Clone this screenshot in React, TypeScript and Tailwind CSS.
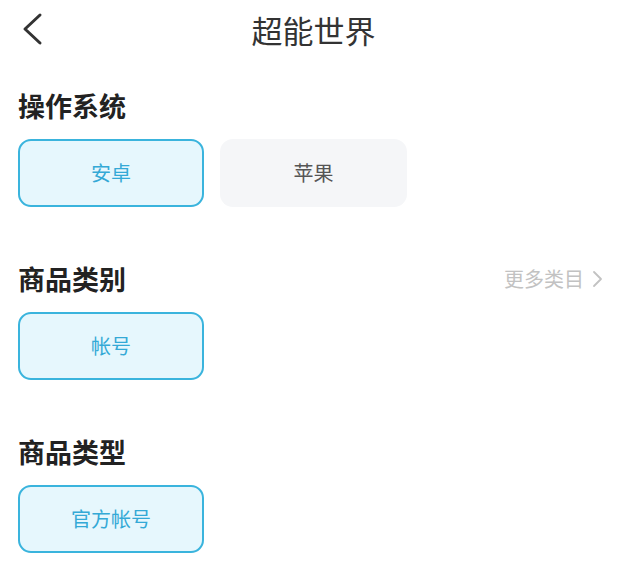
import React from "react";

const font = { fontFamily: '"Noto Sans CJK SC", "Noto Sans", sans-serif' };

function Chip({ label, active }: { label: string; active?: boolean }) {
  return (
    <div
      className={
        active
          ? "w-[186px] h-[68px] rounded-[13px] border-2 border-[#3ab4dd] bg-[#e6f7fd] flex items-center justify-center text-[20px] text-[#34a9d6]"
          : "w-[187px] h-[68px] rounded-[13px] bg-[#f5f6f8] flex items-center justify-center text-[20px] text-[#555555]"
      }
    >
      {label}
    </div>
  );
}

function Section({ title, more, children }: { title: string; more?: boolean; children: React.ReactNode }) {
  return (
    <div className="flex flex-col">
      <div className="flex items-center justify-between h-[36px] pr-[24px]">
        <div className="text-[27px] font-bold text-[#222222] leading-[36px]">{title}</div>
        {more && (
          <div className="flex items-center text-[20px] text-[#c2c2c2] gap-[8px]">
            <span>更多类目</span>
            <svg width="11" height="18" viewBox="0 0 11 18" fill="none">
              <path d="M2 2l7 7-7 7" stroke="#c2c2c2" strokeWidth="1.8" strokeLinecap="round" strokeLinejoin="round" />
            </svg>
          </div>
        )}
      </div>
      <div className="flex gap-[16px] mt-[15px]">{children}</div>
    </div>
  );
}

export default function App() {
  return (
    <div className="w-[627px] h-[566px] bg-white overflow-hidden" style={font}>
      <div className="relative h-[60px] flex items-center justify-center">
        <svg className="absolute left-[20px] top-[12px]" width="24" height="34" viewBox="0 0 24 34" fill="none">
          <path d="M20 3L5 17l15 14" stroke="#333333" strokeWidth="3" strokeLinecap="round" strokeLinejoin="round" />
        </svg>
        <div className="text-[31px] text-[#333333] leading-[40px]">超能世界</div>
      </div>
      <div className="pl-[18px] pt-[28px] flex flex-col gap-[54px]">
        <Section title="操作系统">
          <Chip label="安卓" active />
          <Chip label="苹果" />
        </Section>
        <Section title="商品类别" more>
          <Chip label="帐号" active />
        </Section>
        <Section title="商品类型">
          <Chip label="官方帐号" active />
        </Section>
      </div>
    </div>
  );
}
